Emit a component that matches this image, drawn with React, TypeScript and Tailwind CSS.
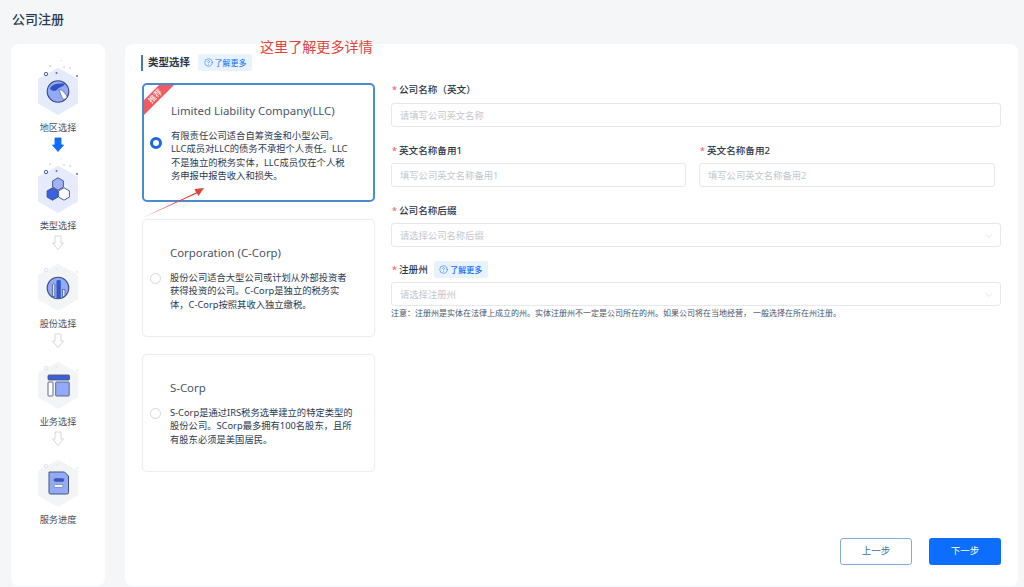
import { ChevronDown, CircleHelp } from "lucide-react";
import type { ReactNode } from "react";

const FONT = "font-['Noto_Sans','Noto_Sans_CJK_SC',sans-serif]";

function Hex({ active, children }: { active: boolean; children: ReactNode }) {
  const dot = active ? "#5b6fb5" : "#e6e8ee";
  return (
    <svg width="60" height="60" viewBox="0 0 60 60" className="shrink-0">
      <path
        d="M30 9 L49 19.5 L49 43 L30 54 L11 43 L11 19.5 Z"
        fill={active ? "#e6ebfb" : "#f3f4f6"}
        stroke={active ? "#e6ebfb" : "#f3f4f6"}
        strokeWidth="2"
        strokeLinejoin="round"
      />
      <circle cx="18" cy="14" r="1.7" fill="none" stroke={active ? "#4c5fb0" : "#dfe3f2"} strokeWidth="1" />
      <circle cx="28.5" cy="13" r="1" fill={dot} />
      <circle cx="49" cy="16" r="1" fill={dot} />
      <circle cx="22" cy="6" r="0.6" fill={dot} />
      <circle cx="36" cy="7" r="0.5" fill={dot} />
      <circle cx="42" cy="8" r="0.5" fill={dot} />
      <circle cx="33" cy="0.8" r="0.4" fill={dot} />
      {children}
    </svg>
  );
}

function GlobeGlyph() {
  return (
    <g>
      <circle cx="30" cy="31.5" r="10.8" fill="#93abf6" stroke="#3d4f86" strokeWidth="1.1" />
      <path d="M22 29 C23 25 27 23 37 23.5 C36 27 31 27 30 29 C27 32 24 31 22 29 Z" fill="#2f53c4" />
      <path d="M31 30 L34 30 L39 36 C39 39 36 40 34.5 38.5 Z" fill="#fff" stroke="#3d4f86" strokeWidth="0.6" />
    </g>
  );
}

function HexGlyph() {
  const h = (x: number, y: number) =>
    `M${x} ${y - 6.2} L${x + 5.4} ${y - 3.1} L${x + 5.4} ${y + 3.1} L${x} ${y + 6.2} L${x - 5.4} ${y + 3.1} L${x - 5.4} ${y - 3.1} Z`;
  return (
    <g stroke="#3d4f86" strokeWidth="0.9" strokeLinejoin="round">
      <path d={h(30, 26)} fill="#9fb3f5" />
      <path d={h(24.5, 36)} fill="#3a62e2" />
      <path d={h(36, 36)} fill="#fff" />
    </g>
  );
}

function BarsGlyph() {
  return (
    <g>
      <circle cx="30" cy="32" r="10.8" fill="#93abf6" stroke="#3d4f86" strokeWidth="1.1" />
      <path d="M24.5 40 V28.5 Q24.5 27.8 25.5 27.8 Q26.8 27.8 26.8 28.5 V41 Z" fill="#dfe6fb" stroke="#3d4f86" strokeWidth="0.7" />
      <path d="M28.5 42.4 V25 Q28.5 24 30.5 24 Q32.8 24 32.8 25 V42.4 Z" fill="#3457c8" />
      <path d="M34.5 41.5 V33.5 H37 V39.5 Z" fill="#dfe6fb" stroke="#3d4f86" strokeWidth="0.7" />
    </g>
  );
}

function LayoutGlyph() {
  return (
    <g stroke="#4d5b82" strokeWidth="0.9" strokeLinejoin="round">
      <rect x="20" y="21" width="21.5" height="5" rx="1" fill="#3a5fd6" />
      <rect x="20" y="28" width="5" height="14" rx="0.8" fill="#fff" />
      <rect x="27.7" y="28" width="13.5" height="14" rx="0.8" fill="#93abf6" />
    </g>
  );
}

function DocGlyph() {
  return (
    <g strokeLinejoin="round">
      <path d="M21 20 H36.5 L40.5 24 V40.5 Q40.5 42 39 42 H22.5 Q21 42 21 40.5 Z" fill="#93abf6" stroke="#43527f" strokeWidth="1" />
      <rect x="26" y="26.5" width="10" height="3" rx="1.5" fill="#3457c8" stroke="#43527f" strokeWidth="0.5" />
      <rect x="26" y="32.5" width="9" height="2.8" rx="1.4" fill="#fff" stroke="#43527f" strokeWidth="0.5" />
    </g>
  );
}

function DownArrow({ active }: { active: boolean }) {
  return (
    <svg width="12" height="16" viewBox="0 0 12 16" className="mt-[2px] mb-[5px]">
      <path
        d="M3 1 H9 V8 H11.5 L6 14.5 L0.5 8 H3 Z"
        fill={active ? "#0d6efd" : "#fff"}
        stroke={active ? "#0d6efd" : "#cfd2d6"}
        strokeWidth="0.9"
        strokeLinejoin="round"
      />
    </svg>
  );
}

const steps = [
  { label: "地区选择", glyph: <GlobeGlyph />, on: true, arrow: true },
  { label: "类型选择", glyph: <HexGlyph />, on: true, arrow: false },
  { label: "股份选择", glyph: <BarsGlyph />, on: false, arrow: false },
  { label: "业务选择", glyph: <LayoutGlyph />, on: false, arrow: false },
  { label: "服务进度", glyph: <DocGlyph />, on: false, arrow: false },
];

function LearnMore() {
  return (
    <span className="flex h-[17px] w-[54px] items-center justify-center gap-[2px] rounded-[2px] bg-[#e8f3ff] text-[8px] text-[#0d6efd]">
      <CircleHelp size={9} strokeWidth={1.4} />
      了解更多
    </span>
  );
}

function TypeCard({
  title,
  lines,
  selected,
  h,
}: {
  title: string;
  lines: string[];
  selected?: boolean;
  h: string;
}) {
  return (
    <div
      className={`relative flex w-[233px] items-center overflow-hidden rounded-[5px] bg-white ${h} ${
        selected ? "border-2 border-[#4a8ccb] pl-[6px]" : "border border-[#eceded] pl-[7px] shadow-[0_0_2px_rgba(0,0,0,0.04)]"
      }`}
    >
      {selected && (
        <>
          <svg width="32" height="32" viewBox="0 0 32 32" className="absolute left-0 top-0">
            <path d="M15 0 H30 L0 30 V15 Z" fill="#ef5a63" />
          </svg>
          <span className="absolute left-[3px] top-[6px] -rotate-45 text-[8px] leading-[10px] text-white">推荐</span>
        </>
      )}
      {selected ? (
        <span className="h-[12px] w-[12px] shrink-0 rounded-full border-[3px] border-[#1769e0] bg-white" />
      ) : (
        <span className="h-[11px] w-[11px] shrink-0 rounded-full border border-[#d5d7da] bg-white" />
      )}
      <div className="ml-[9px]">
        <div className="text-[11.4px] leading-[16px] text-[#4a5568]">{title}</div>
        <div className="mt-[10px] text-[9.3px] leading-[13.5px] text-[#2d3a4f]">
          {lines.map((l) => (
            <div key={l} className="whitespace-nowrap">
              {l}
            </div>
          ))}
        </div>
      </div>
    </div>
  );
}

function FieldLabel({ children, extra }: { children: string; extra?: ReactNode }) {
  return (
    <div className="flex items-center text-[9.6px] font-medium leading-[13px] text-[#2b3648]">
      <span className="ml-[1px] w-[7px] text-[9px] text-[#e8646a]">*</span>
      <span>{children}</span>
      {extra}
    </div>
  );
}

function TextInput({ placeholder, className }: { placeholder: string; className: string }) {
  return (
    <input
      placeholder={placeholder}
      className={`h-[24px] rounded-[3px] border border-[#e6e8eb] bg-white px-[8px] text-[9.3px] outline-none placeholder:text-[#c3c7cd] ${className}`}
    />
  );
}

function SelectBox({ placeholder }: { placeholder: string }) {
  return (
    <div className="flex h-[24px] w-[610px] items-center justify-between rounded-[3px] border border-[#e6e8eb] bg-white pl-[8px] pr-[5px] pt-[1px] text-[9.3px] text-[#c3c7cd]">
      <span>{placeholder}</span>
      <ChevronDown size={12} strokeWidth={1.2} className="text-[#cfd2d6]" />
    </div>
  );
}

export default function App() {
  return (
    <div className={`flex h-[587px] w-[1024px] flex-col overflow-hidden bg-[#f5f6f7] ${FONT}`}>
      <div className="flex h-[44px] shrink-0 items-start pl-[12px] pt-[10px] text-[13px] font-medium leading-[18px] text-[#2c3a50]">
        公司注册
      </div>
      <div className="flex min-h-0 flex-1 pb-[1px] pl-[11px]">
        <aside className="flex w-[94px] shrink-0 flex-col items-center rounded-[8px] bg-white pt-[16px]">
          {steps.map((s, i) => (
            <div key={s.label} className="flex flex-col items-center">
              <Hex active={s.on}>{s.glyph}</Hex>
              <div className="mt-[1px] h-[14px] whitespace-nowrap text-[9.2px] leading-[14px] text-[#46505f]">{s.label}</div>
              {i < steps.length - 1 && <DownArrow active={s.arrow} />}
            </div>
          ))}
        </aside>

        <main className="relative ml-[20px] flex w-[893px] shrink-0 flex-col rounded-[8px] bg-white pl-[17px] pr-[16px] pt-[10px]">
          <span className="absolute left-[135px] top-[-7px] whitespace-nowrap text-[14.1px] leading-[20px] text-[#e0453c]">
            这里了解更多详情
          </span>
          <div className="-ml-[1px] flex h-[17px] items-center">
            <span className="h-[16px] w-[2px] bg-[#3f7ab5]" />
            <span className="ml-[5px] mr-[8px] text-[10.5px] font-bold text-[#2b3648]">类型选择</span>
            <LearnMore />
          </div>

          <div className="mt-[12px] flex flex-1 gap-[16px]">
            <div className="flex flex-col gap-[17px]">
              <TypeCard
                selected
                h="h-[119px]"
                title="Limited Liability Company(LLC)"
                lines={[
                  "有限责任公司适合自筹资金和小型公司。",
                  "LLC成员对LLC的债务不承担个人责任。LLC",
                  "不是独立的税务实体，LLC成员仅在个人税",
                  "务申报中报告收入和损失。",
                ]}
              />
              <TypeCard
                h="h-[118px]"
                title="Corporation (C-Corp)"
                lines={[
                  "股份公司适合大型公司或计划从外部投资者",
                  "获得投资的公司。C-Corp是独立的税务实",
                  "体，C-Corp按照其收入独立缴税。",
                ]}
              />
              <TypeCard
                h="h-[118px]"
                title="S-Corp"
                lines={[
                  "S-Corp是通过IRS税务选举建立的特定类型的",
                  "股份公司。SCorp最多拥有100名股东，且所",
                  "有股东必须是美国居民。",
                ]}
              />
            </div>

            <div className="flex w-[610px] flex-col">
              <FieldLabel>公司名称（英文）</FieldLabel>
              <TextInput placeholder="请填写公司英文名称" className="mt-[7px] w-[610px]" />

              <div className="mt-[17px] flex gap-[13px]">
                <div className="flex w-[295px] flex-col gap-[6px]">
                  <FieldLabel>英文名称备用1</FieldLabel>
                  <TextInput placeholder="填写公司英文名称备用1" className="w-[295px]" />
                </div>
                <div className="flex w-[296px] flex-col gap-[6px]">
                  <FieldLabel>英文名称备用2</FieldLabel>
                  <TextInput placeholder="填写公司英文名称备用2" className="w-[296px]" />
                </div>
              </div>

              <div className="mt-[17px] flex flex-col gap-[6px]">
                <FieldLabel>公司名称后缀</FieldLabel>
                <SelectBox placeholder="请选择公司名称后缀" />
              </div>

              <div className="mt-[14px] flex flex-col gap-[4px]">
                <FieldLabel
                  extra={
                    <span className="ml-[6px]">
                      <LearnMore />
                    </span>
                  }
                >
                  注册州
                </FieldLabel>
                <SelectBox placeholder="请选择注册州" />
              </div>

              <div className="mt-[1px] whitespace-nowrap text-[8px] leading-[12px] text-[#4a5568]">
                注意：注册州是实体在法律上成立的州。实体注册州不一定是公司所在的州。如果公司将在当地经营， 一般选择在所在州注册。
              </div>

              <div className="mt-auto flex justify-end gap-[17px] pb-[21px]">
                <button className="h-[27px] w-[72px] rounded-[3px] border border-[#86acd4] bg-white text-[9.5px] text-[#3d6ea8]">
                  上一步
                </button>
                <button className="h-[27px] w-[72px] rounded-[3px] bg-[#0d6efd] text-[9.5px] text-white">下一步</button>
              </div>
            </div>
          </div>

          <svg width="70" height="36" viewBox="0 0 70 36" className="pointer-events-none absolute left-[16px] top-[143px]">
            <path d="M1 31 L55 5.5 L53.5 2 L63 1 L57.5 9 L56 6.5 Z" fill="#e0453c" />
          </svg>
        </main>
      </div>
    </div>
  );
}
